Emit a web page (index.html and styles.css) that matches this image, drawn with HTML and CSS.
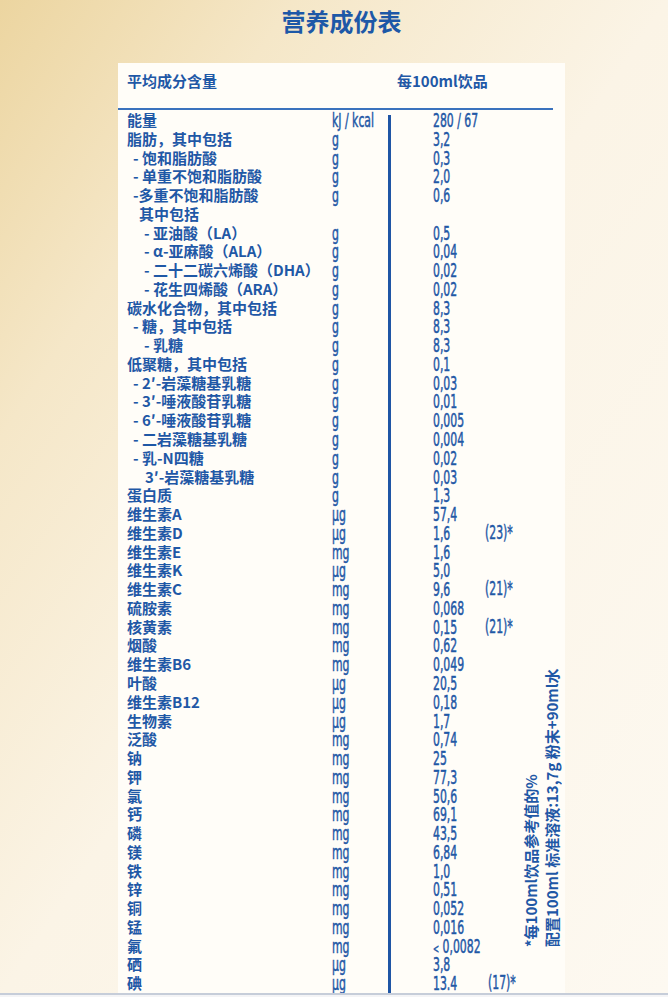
FILE: index.html
```html
<!DOCTYPE html>
<html lang="zh">
<head>
<meta charset="utf-8">
<title>营养成份表</title>
<link rel="stylesheet" href="styles.css">
</head>
<body>
<h1 class="title">营养成份表</h1>
<div class="card">
  <div class="head">
    <span class="h-name">平均成分含量</span>
    <span class="h-per">每100ml饮品</span>
  </div>
  <div class="rule"></div>
  <div class="content">
    <div class="col-label">
      <div class="row">能量</div>
      <div class="row">脂肪，其中包括</div>
      <div class="row l1">- 饱和脂肪酸</div>
      <div class="row l1">- 单重不饱和脂肪酸</div>
      <div class="row l1">-多重不饱和脂肪酸</div>
      <div class="row l1b">其中包括</div>
      <div class="row l2">- 亚油酸（LA）</div>
      <div class="row l2">- α-亚麻酸（ALA）</div>
      <div class="row l2">- 二十二碳六烯酸（DHA）</div>
      <div class="row l2">- 花生四烯酸（ARA）</div>
      <div class="row">碳水化合物，其中包括</div>
      <div class="row l1">- 糖，其中包括</div>
      <div class="row l2">- 乳糖</div>
      <div class="row">低聚糖，其中包括</div>
      <div class="row l1">- 2′-岩藻糖基乳糖</div>
      <div class="row l1">- 3′-唾液酸苷乳糖</div>
      <div class="row l1">- 6′-唾液酸苷乳糖</div>
      <div class="row l1">- 二岩藻糖基乳糖</div>
      <div class="row l1">- 乳-N四糖</div>
      <div class="row l3">3′-岩藻糖基乳糖</div>
      <div class="row">蛋白质</div>
      <div class="row">维生素A</div>
      <div class="row">维生素D</div>
      <div class="row">维生素E</div>
      <div class="row">维生素K</div>
      <div class="row">维生素C</div>
      <div class="row">硫胺素</div>
      <div class="row">核黄素</div>
      <div class="row">烟酸</div>
      <div class="row">维生素B6</div>
      <div class="row">叶酸</div>
      <div class="row">维生素B12</div>
      <div class="row">生物素</div>
      <div class="row">泛酸</div>
      <div class="row">钠</div>
      <div class="row">钾</div>
      <div class="row">氯</div>
      <div class="row">钙</div>
      <div class="row">磷</div>
      <div class="row">镁</div>
      <div class="row">铁</div>
      <div class="row">锌</div>
      <div class="row">铜</div>
      <div class="row">锰</div>
      <div class="row">氟</div>
      <div class="row">硒</div>
      <div class="row">碘</div>
    </div>
    <div class="col-unit">
      <div class="row"><span class="num">kJ / kcal</span></div>
      <div class="row"><span class="num">g</span></div>
      <div class="row"><span class="num">g</span></div>
      <div class="row"><span class="num">g</span></div>
      <div class="row"><span class="num">g</span></div>
      <div class="row"></div>
      <div class="row"><span class="num">g</span></div>
      <div class="row"><span class="num">g</span></div>
      <div class="row"><span class="num">g</span></div>
      <div class="row"><span class="num">g</span></div>
      <div class="row"><span class="num">g</span></div>
      <div class="row"><span class="num">g</span></div>
      <div class="row"><span class="num">g</span></div>
      <div class="row"><span class="num">g</span></div>
      <div class="row"><span class="num">g</span></div>
      <div class="row"><span class="num">g</span></div>
      <div class="row"><span class="num">g</span></div>
      <div class="row"><span class="num">g</span></div>
      <div class="row"><span class="num">g</span></div>
      <div class="row"><span class="num">g</span></div>
      <div class="row"><span class="num">g</span></div>
      <div class="row"><span class="num">µg</span></div>
      <div class="row"><span class="num">µg</span></div>
      <div class="row"><span class="num">mg</span></div>
      <div class="row"><span class="num">µg</span></div>
      <div class="row"><span class="num">mg</span></div>
      <div class="row"><span class="num">mg</span></div>
      <div class="row"><span class="num">mg</span></div>
      <div class="row"><span class="num">mg</span></div>
      <div class="row"><span class="num">mg</span></div>
      <div class="row"><span class="num">µg</span></div>
      <div class="row"><span class="num">µg</span></div>
      <div class="row"><span class="num">µg</span></div>
      <div class="row"><span class="num">mg</span></div>
      <div class="row"><span class="num">mg</span></div>
      <div class="row"><span class="num">mg</span></div>
      <div class="row"><span class="num">mg</span></div>
      <div class="row"><span class="num">mg</span></div>
      <div class="row"><span class="num">mg</span></div>
      <div class="row"><span class="num">mg</span></div>
      <div class="row"><span class="num">mg</span></div>
      <div class="row"><span class="num">mg</span></div>
      <div class="row"><span class="num">mg</span></div>
      <div class="row"><span class="num">mg</span></div>
      <div class="row"><span class="num">mg</span></div>
      <div class="row"><span class="num">µg</span></div>
      <div class="row"><span class="num">µg</span></div>
    </div>
    <div class="divider"></div>
    <div class="col-value">
      <div class="row"><span class="v"><span class="num">280 / 67</span></span></div>
      <div class="row"><span class="v"><span class="num">3,2</span></span></div>
      <div class="row"><span class="v"><span class="num">0,3</span></span></div>
      <div class="row"><span class="v"><span class="num">2,0</span></span></div>
      <div class="row"><span class="v"><span class="num">0,6</span></span></div>
      <div class="row"></div>
      <div class="row"><span class="v"><span class="num">0,5</span></span></div>
      <div class="row"><span class="v"><span class="num">0,04</span></span></div>
      <div class="row"><span class="v"><span class="num">0,02</span></span></div>
      <div class="row"><span class="v"><span class="num">0,02</span></span></div>
      <div class="row"><span class="v"><span class="num">8,3</span></span></div>
      <div class="row"><span class="v"><span class="num">8,3</span></span></div>
      <div class="row"><span class="v"><span class="num">8,3</span></span></div>
      <div class="row"><span class="v"><span class="num">0,1</span></span></div>
      <div class="row"><span class="v"><span class="num">0,03</span></span></div>
      <div class="row"><span class="v"><span class="num">0,01</span></span></div>
      <div class="row"><span class="v"><span class="num">0,005</span></span></div>
      <div class="row"><span class="v"><span class="num">0,004</span></span></div>
      <div class="row"><span class="v"><span class="num">0,02</span></span></div>
      <div class="row"><span class="v"><span class="num">0,03</span></span></div>
      <div class="row"><span class="v"><span class="num">1,3</span></span></div>
      <div class="row"><span class="v"><span class="num">57,4</span></span></div>
      <div class="row"><span class="v"><span class="num">1,6</span></span><span class="num">(23)*</span></div>
      <div class="row"><span class="v"><span class="num">1,6</span></span></div>
      <div class="row"><span class="v"><span class="num">5,0</span></span></div>
      <div class="row"><span class="v"><span class="num">9,6</span></span><span class="num">(21)*</span></div>
      <div class="row"><span class="v"><span class="num">0,068</span></span></div>
      <div class="row"><span class="v"><span class="num">0,15</span></span><span class="num">(21)*</span></div>
      <div class="row"><span class="v"><span class="num">0,62</span></span></div>
      <div class="row"><span class="v"><span class="num">0,049</span></span></div>
      <div class="row"><span class="v"><span class="num">20,5</span></span></div>
      <div class="row"><span class="v"><span class="num">0,18</span></span></div>
      <div class="row"><span class="v"><span class="num">1,7</span></span></div>
      <div class="row"><span class="v"><span class="num">0,74</span></span></div>
      <div class="row"><span class="v"><span class="num">25</span></span></div>
      <div class="row"><span class="v"><span class="num">77,3</span></span></div>
      <div class="row"><span class="v"><span class="num">50,6</span></span></div>
      <div class="row"><span class="v"><span class="num">69,1</span></span></div>
      <div class="row"><span class="v"><span class="num">43,5</span></span></div>
      <div class="row"><span class="v"><span class="num">6,84</span></span></div>
      <div class="row"><span class="v"><span class="num">1,0</span></span></div>
      <div class="row"><span class="v"><span class="num">0,51</span></span></div>
      <div class="row"><span class="v"><span class="num">0,052</span></span></div>
      <div class="row"><span class="v"><span class="num">0,016</span></span></div>
      <div class="row"><span class="v"><span class="num"><small class="lt">&lt;</small> 0,0082</span></span></div>
      <div class="row"><span class="v"><span class="num">3,8</span></span></div>
      <div class="row"><span class="v"><span class="num">13.4</span></span><span class="num fn2">(17)*</span></div>
    </div>
    <div class="notes">
      <div>*每100ml饮品参考值的%</div>
      <div>配置100ml 标准溶液:13,7g 粉末+90ml水</div>
    </div>
  </div>
</div>
<div class="foot"></div>
</body>
</html>
```
FILE: styles.css
```css
html, body {
  margin: 0;
  padding: 0;
}

body {
  width: 668px;
  height: 997px;
  overflow: hidden;
  background: linear-gradient(to bottom right, #ecd5a0 0%, #f5e7c8 22%, #fbf4e6 50%, #fdf9f1 100%);
  font-family: "Noto Sans CJK SC", "Noto Sans", sans-serif;
  color: #1f58a6;
}

.title {
  margin: 0;
  box-sizing: border-box;
  height: 63px;
  padding-top: 8px;
  padding-left: 15px;
  font-size: 24px;
  line-height: 26px;
  font-weight: 700;
  text-align: center;
  color: #1d58a7;
}

.card {
  margin-left: 118px;
  width: 447px;
  height: 930px;
  background: #fffdf8;
  overflow: hidden;
}

.head {
  display: flex;
  box-sizing: border-box;
  height: 45px;
  padding-left: 9px;
  padding-top: 8px;
  font-size: 15px;
  font-weight: 700;
  line-height: 20px;
}

.h-name {
  width: 270px;
}

.rule {
  width: 435px;
  height: 2px;
  background: #3a72bd;
}

.content {
  display: flex;
  padding-left: 9px;
  padding-top: 1px;
}

.row {
  height: 18.78px;
  line-height: 18.78px;
  white-space: nowrap;
}

.col-label {
  width: 205px;
  flex-shrink: 0;
  font-size: 15px;
  font-weight: 700;
}

.l1 { padding-left: 6px; }
.l1b { padding-left: 12px; }
.l2 { padding-left: 17px; }
.l3 { padding-left: 18px; }

.col-unit {
  width: 56px;
  flex-shrink: 0;
}

.divider {
  width: 2.5px;
  flex-shrink: 0;
  margin-top: 4px;
  background: #1f55a5;
}

.col-value {
  margin-left: 42.5px;
  width: 87px;
  flex-shrink: 0;
}

.col-value .row {
  display: flex;
}

.v {
  display: block;
  width: 52px;
  flex-shrink: 0;
}

.fn2 {
  margin-left: 3px;
}

.num {
  display: inline-block;
  font-family: "DejaVu Sans Condensed", "DejaVu Sans", sans-serif;
  font-stretch: condensed;
  font-size: 19.5px;
  transform: scaleX(0.62);
  transform-origin: 0 50%;
  -webkit-text-stroke: 0.5px #1f58a6;
}

.lt {
  font-size: 13px;
}

.notes {
  align-self: flex-end;
  flex-shrink: 0;
  margin-bottom: 46px;
  height: 280px;
  writing-mode: vertical-rl;
  text-orientation: sideways;
  transform: rotate(180deg);
  font-size: 15px;
  font-weight: 700;
  line-height: 21px;
  white-space: nowrap;
}

.foot {
  height: 2px;
  background: #c6cdd9;
  border-bottom: 2px solid #f4f4f6;
}
```
